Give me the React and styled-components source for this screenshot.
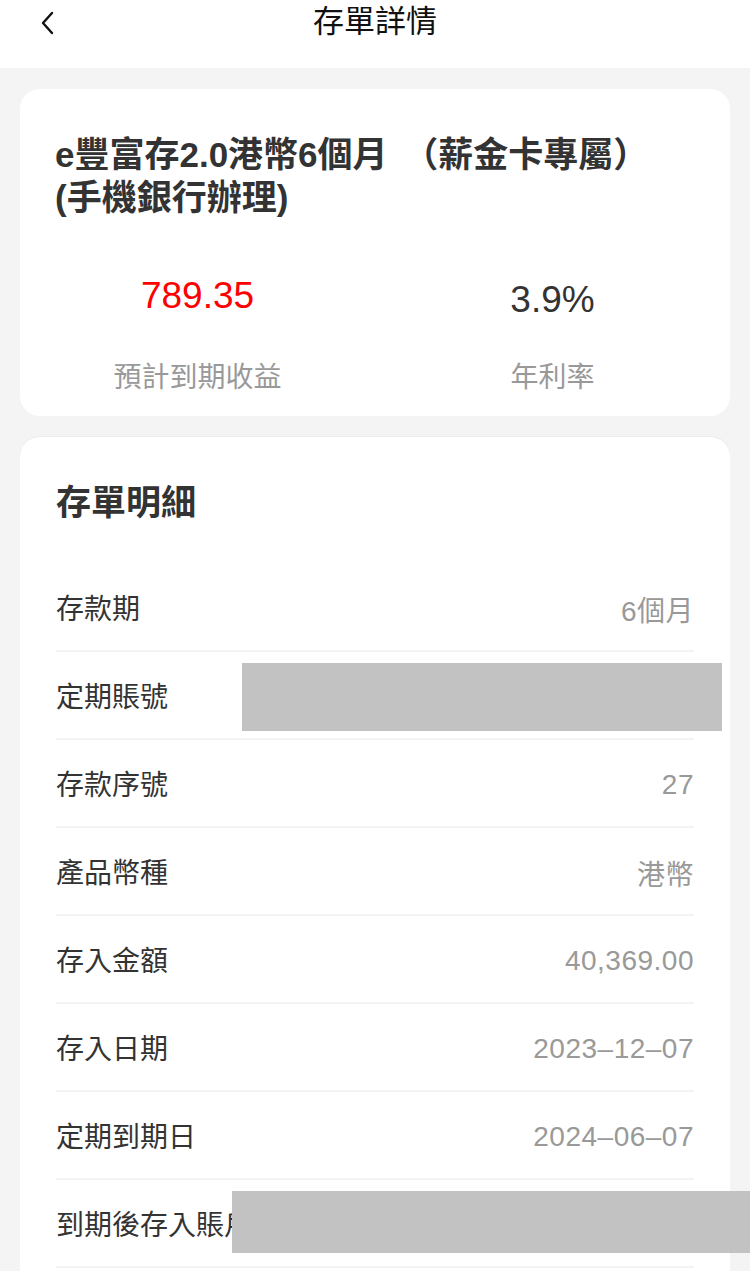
import React from "react";
import styled, { createGlobalStyle } from "styled-components";

const GlobalStyle = createGlobalStyle`
  html, body {
    margin: 0;
    padding: 0;
    background: #f4f4f4;
    font-family: "Liberation Sans", "Noto Sans CJK TC", sans-serif;
  }
`;

const Page = styled.div`
  width: 750px;
  min-height: 1271px;
  background: #f4f4f4;
  overflow: hidden;
`;

const Header = styled.div`
  position: relative;
  height: 68px;
  background: #fff;
  display: flex;
  justify-content: center;
`;

const BackButton = styled.div`
  position: absolute;
  left: 34px;
  top: 8px;
  width: 28px;
  height: 30px;
  display: flex;
  align-items: center;
  justify-content: center;
`;

const HeaderTitle = styled.div`
  font-size: 31px;
  line-height: 44px;
  color: #111;
`;

const Content = styled.div`
  padding: 21px 20px 0;
  display: flex;
  flex-direction: column;
  gap: 21px;
`;

const Card = styled.div`
  background: #fff;
  border-radius: 20px;
`;

const SummaryCard = styled(Card)`
  padding: 44px 0 18px;
`;

const ProductTitle = styled.div`
  padding: 0 35px;
  font-size: 35px;
  line-height: 43px;
  font-weight: bold;
  color: #333;
  word-spacing: 6px;
`;

const Stats = styled.div`
  display: grid;
  grid-template-columns: 1fr 1fr;
  margin-top: 54px;
`;

const Stat = styled.div`
  display: flex;
  flex-direction: column;
  align-items: center;
`;

const StatValue = styled.div`
  font-size: 37px;
  line-height: 50px;
  color: ${(p) => (p.$red ? "#ff0000" : "#333")};
  transform: translateY(${(p) => (p.$red ? "-2px" : "2px")});
`;

const StatLabel = styled.div`
  margin-top: 35px;
  font-size: 28px;
  line-height: 40px;
  color: #999;
`;

const DetailCard = styled(Card)`
  padding: 44px 36px 60px;
  box-shadow: 0 -1px 0 #ececec;
`;

const DetailTitle = styled.div`
  font-size: 35px;
  line-height: 44px;
  font-weight: bold;
  color: #333;
  margin-bottom: 39px;
`;

const Row = styled.div`
  position: relative;
  height: 86px;
  display: flex;
  align-items: center;
  justify-content: space-between;
  border-bottom: 2px solid #f3f3f3;
`;

const RowLabel = styled.span`
  font-size: 28px;
  color: #333;
  white-space: nowrap;
`;

const RowValue = styled.span`
  font-size: 28px;
  color: #999;
  letter-spacing: 0.5px;
  transform: translateY(2px);
`;

const Redaction = styled.div`
  position: absolute;
  top: 11px;
  left: ${(p) => p.$left}px;
  width: ${(p) => p.$width}px;
  height: ${(p) => p.$height}px;
  background: #c2c2c2;
`;

const rows = [
  { label: "存款期", value: "6個月" },
  { label: "定期賬號", hidden: { left: 186, width: 480, height: 68 } },
  { label: "存款序號", value: "27" },
  { label: "產品幣種", value: "港幣" },
  { label: "存入金額", value: "40,369.00" },
  { label: "存入日期", value: "2023–12–07" },
  { label: "定期到期日", value: "2024–06–07" },
  { label: "到期後存入賬戶", hidden: { left: 176, width: 518, height: 62 } },
];

const DetailRow = ({ label, value, hidden }) => (
  <Row>
    <RowLabel>{label}</RowLabel>
    {value && <RowValue>{value}</RowValue>}
    {hidden && <Redaction $left={hidden.left} $width={hidden.width} $height={hidden.height} />}
  </Row>
);

export default function App() {
  return (
    <Page>
      <GlobalStyle />
      <Header>
        <BackButton>
          <svg width="18" height="24" viewBox="0 0 18 24" fill="none">
            <path d="M13 2 L4 12 L13 22" stroke="#111" strokeWidth="2.4" strokeLinecap="round" strokeLinejoin="round" />
          </svg>
        </BackButton>
        <HeaderTitle>存單詳情</HeaderTitle>
      </Header>
      <Content>
        <SummaryCard>
          <ProductTitle>
            e豐富存2.0港幣6個月 （薪金卡專屬）
            <br />
            (手機銀行辦理)
          </ProductTitle>
          <Stats>
            <Stat>
              <StatValue $red>789.35</StatValue>
              <StatLabel>預計到期收益</StatLabel>
            </Stat>
            <Stat>
              <StatValue>3.9%</StatValue>
              <StatLabel>年利率</StatLabel>
            </Stat>
          </Stats>
        </SummaryCard>
        <DetailCard>
          <DetailTitle>存單明細</DetailTitle>
          {rows.map((r) => (
            <DetailRow key={r.label} {...r} />
          ))}
        </DetailCard>
      </Content>
    </Page>
  );
}
